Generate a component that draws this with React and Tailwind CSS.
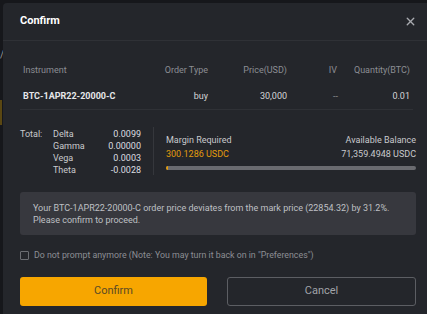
import React, { useState } from 'react';
import { X } from 'lucide-react';

const greeks = [
  ['Delta', '0.0099'],
  ['Gamma', '0.00000'],
  ['Vega', '0.0003'],
  ['Theta', '-0.0028'],
];

export default function App() {
  const [noPrompt, setNoPrompt] = useState(false);

  return (
    <div
      className="relative w-[427px] h-[314px] overflow-hidden bg-[#16171b] pl-[3px] pt-[3px]"
      style={{ fontFamily: 'Roboto, "Liberation Sans", sans-serif' }}
    >
      {/* page behind the modal */}
      <div className="absolute left-0 top-[50px] text-[10px] leading-none text-[#9a9ca0]">/</div>
      <div className="absolute left-0 top-[100px] w-[2px] h-[25px] bg-[#5a4712]" />

      <div className="relative flex flex-col w-[424px] h-[311px] bg-[#24262b] rounded-tl-[4px]">
        {/* header */}
        <div className="flex items-center justify-between h-[38px] pl-[17px] pr-[10px] border-b border-[#2f3136]">
          <h2 className="text-[11px] font-bold text-white">Confirm</h2>
          <X size={13} strokeWidth={2.5} className="text-[#a9abb0]" />
        </div>

        <div className="flex flex-col pl-[17px] pr-[11px] pt-[17px]">
          {/* order table */}
          <div className="w-[393px] text-[9px]">
            <div className="grid grid-cols-[107px_78px_79px_51px_72px] items-center h-[26px] px-[3px] text-[#8c8e94]">
              <span>Instrument</span>
              <span className="text-right">Order Type</span>
              <span className="text-right">Price(USD)</span>
              <span className="text-right pr-[1px]">IV</span>
              <span className="text-right">Quantity(BTC)</span>
            </div>
            <div className="grid grid-cols-[107px_78px_79px_51px_72px] items-center h-[26px] px-[3px] border-b border-[#2f3136] text-[#d4d5d8]">
              <span className="font-bold text-[#e6e7e9]">BTC-1APR22-20000-C</span>
              <span className="text-right">buy</span>
              <span className="text-right">30,000</span>
              <span className="text-right text-[#8c8e94]">--</span>
              <span className="text-right">0.01</span>
            </div>
          </div>

          {/* totals + margin */}
          <div className="flex items-center mt-[17px] h-[48px]">
            <div className="flex self-stretch pt-[1px] text-[9px] leading-[12px] text-[#c9cacd]">
              <span className="w-[33px]">Total:</span>
              <div className="grid grid-cols-[50px_38px]">
                {greeks.map(([k, v]) => (
                  <React.Fragment key={k}>
                    <span>{k}</span>
                    <span className="text-right text-[#dcdde0]">{v}</span>
                  </React.Fragment>
                ))}
              </div>
            </div>
            <div className="w-px self-stretch bg-[#35373c] ml-[12px]" />
            <div className="flex-1 pl-[12px] text-[9px]">
              <div className="flex justify-between leading-[14px] text-[#c9cacd]">
                <span>Margin Required</span>
                <span>Available Balance</span>
              </div>
              <div className="flex justify-between leading-[14px]">
                <span className="text-[#e39c0c]">300.1286 USDC</span>
                <span className="text-[#c9cacd]">71,359.4948 USDC</span>
              </div>
              <div className="mt-[5px] h-[4px] rounded-full bg-[#6a6b70] overflow-hidden">
                <div className="h-full w-[2px] bg-[#e39c0c]" />
              </div>
            </div>
          </div>

          {/* warning */}
          <div className="mt-[17px] h-[43px] rounded-[3px] bg-[#37383e] px-[13px] pt-[10px] text-[9px] leading-[12px] text-[#bfc0c4]">
            Your BTC-1APR22-20000-C order price deviates from the mark price (22854.32) by 31.2%.
            <br />
            Please confirm to proceed.
          </div>

          {/* checkbox */}
          <label className="flex items-center mt-[16px] h-[9px] gap-[5px] text-[8.8px] text-[#8c8e94] cursor-pointer">
            <span
              onClick={() => setNoPrompt(!noPrompt)}
              className="w-[9px] h-[9px] rounded-[1px] border border-[#6b6d72] flex items-center justify-center"
            >
              {noPrompt && <span className="w-[5px] h-[5px] bg-[#f7a600]" />}
            </span>
            Do not prompt anymore (Note: You may turn it back on in "Preferences")
          </label>

          {/* actions */}
          <div className="flex gap-[20px] mt-[17px]">
            <button className="flex-1 h-[29px] rounded-[3px] bg-[#f7a600] text-[11px] text-[#5a4a25]">
              Confirm
            </button>
            <button className="flex-1 h-[29px] rounded-[3px] border border-[#5c5e63] text-[11px] text-[#a1a3a8]">
              Cancel
            </button>
          </div>
        </div>
      </div>
    </div>
  );
}
